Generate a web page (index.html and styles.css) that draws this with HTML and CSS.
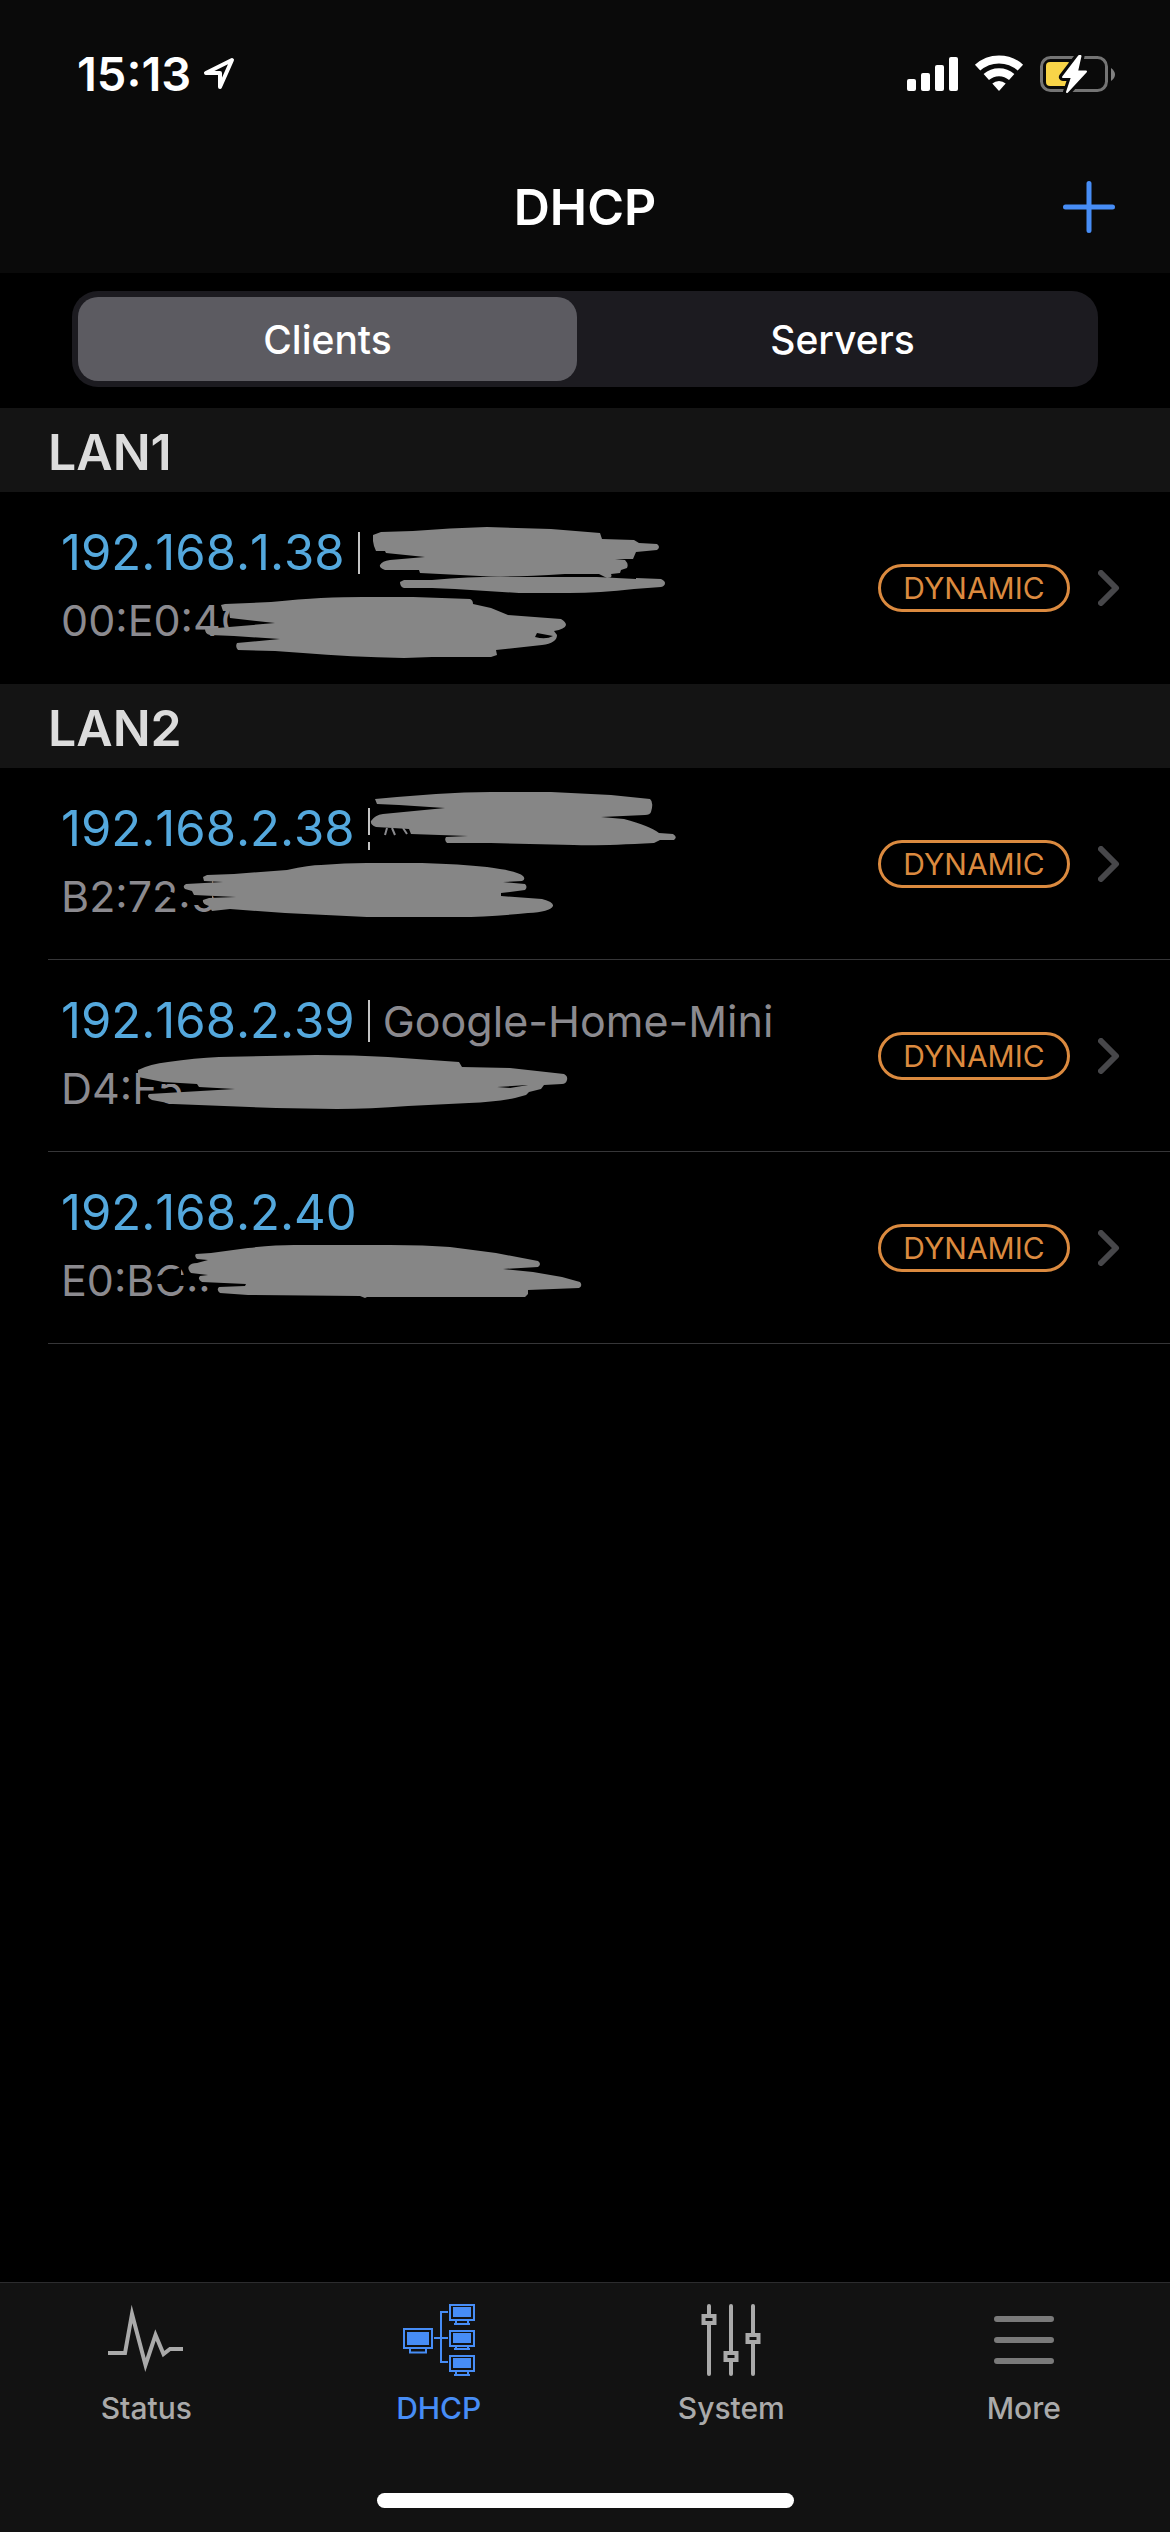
FILE: index.html
```html
<!DOCTYPE html>
<html lang="en">
<head>
<meta charset="utf-8">
<meta name="viewport" content="width=device-width, initial-scale=1">
<title>DHCP</title>
<link rel="stylesheet" href="styles.css">
</head>
<body>
<header class="header">
  <div class="status-bar">
    <div class="clock">
      <span>15:13</span>
      <svg width="32" height="34" viewBox="0 0 32 34" aria-hidden="true"><path d="M29 3 L3 16 H17 V30 Z" fill="none" stroke="#fff" stroke-width="4" stroke-linejoin="round"/></svg>
    </div>
    <svg width="208" height="40" viewBox="0 0 208 40" aria-hidden="true">
      <g fill="#fff">
        <rect x="0" y="25" width="9" height="12" rx="2"/><rect x="14" y="19" width="9" height="18" rx="2"/><rect x="28" y="11" width="9" height="26" rx="2"/><rect x="42" y="3" width="9" height="34" rx="2"/>
        <path d="M92 37 L85.3 29.6 A10 10 0 0 1 98.7 29.6 Z"/>
      </g>
      <g fill="none" stroke="#fff" stroke-width="8"><path d="M70.6 13.6 A32 32 0 0 1 113.4 13.6"/><path d="M79.3 23 A19 19 0 0 1 104.7 23"/></g>
      <rect x="134.5" y="3.5" width="65" height="33" rx="9" fill="none" stroke="#747474" stroke-width="3"/>
      <rect x="139" y="8" width="25" height="24" rx="4" fill="#f8d448"/>
      <path d="M204 14 Q208 17 208 20.500 Q208 24 204 27 Z" fill="#808080"/>
      <path d="M172 2 L156 23 H165 L160 38 L179 17.500 H170 L173.500 2 Z" fill="#fff" stroke="#0a0a0a" stroke-width="8" stroke-linejoin="round"/>
      <path d="M172 2 L156 23 H165 L160 38 L179 17.500 H170 L173.500 2 Z" fill="#fff" stroke="#fff" stroke-width="2" stroke-linejoin="round"/>
    </svg>
  </div>
  <div class="nav-bar">
    <h1 class="title">DHCP</h1>
    <button class="add" type="button" aria-label="Add">
      <svg width="52" height="52" viewBox="0 0 52 52"><path d="M26 2.500 V49.500 M2.500 26 H49.500" stroke="#478df6" stroke-width="5" stroke-linecap="round"/></svg>
    </button>
  </div>
</header>

<main class="content">
  <div class="segments">
    <button class="segment segment-on" type="button" aria-pressed="true">Clients</button>
    <button class="segment" type="button" aria-pressed="false">Servers</button>
  </div>

  <section>
    <h2 class="group">LAN1</h2>
    <a class="client" href="#">
      <span class="details">
        <span class="line"><span class="ip">192.168.1.38</span><span class="bar"></span></span>
        <span class="mac">00:E0:4C</span>
      </span>
      <svg class="scribble" width="720" height="192" viewBox="0 0 720 192" aria-hidden="true">
        <path fill="#000" d="M229 118 L275 120 V160 L234 150 L232 140 L229 130 Z"/>
        <path d="M373 43 L381 40 L413 39 Q450 36 487 35 L551 37 L600 41 L602 47 L634 48 L639 51 L657 52 Q661 55 657 58 L636 60 L633 67 L615 67 L625 68 Q629 72 627 76 L621 78 L620 81 L611 82 Q613 86 607 86 L599 82 L565 82 Q505 86 480 84 L420 81 L419 78 L385 78 Q379 76 380 73 Q382 69 390 68 L425 65 L386 61 L385 59 L376 59 L374 54 L373 49 Z"/>
        <path d="M400 90 L404 88 L432 88 Q480 84 510 85 L597 85 L636 87 L636 86 L661 87 Q665 89 665 91 Q665 94 661 95 L634 97 Q600 101 569 101 L519 101 L455 97 L432 96 L404 96 Q400 95 400 90 Z"/>
        <path fill-rule="evenodd" d="M221 113 L225 112 L271 110 Q300 107 321 106 Q345 105 363 105 L413 105 L470 107 Q473 108 473 112 L491 116 L508 123 L561 127 Q566 130 566 133 Q565 137 554 139 L557 143 Q557 151 542 153 L496 158 L497 163 L491 165 L432 165 L404 166 Q350 165 303 161 L275 159 L238 158 Q235 155 237 151 L280 147 L234 144 L210 143 Q205 142 205 137 L275 131 L230 126 L229 119 L223 119 Z M537 141 L535 145 Q546 148 553 144 Z"/>
      </svg>
      <span class="badge">DYNAMIC</span>
      <svg class="chevron" width="22" height="36" viewBox="0 0 22 36" aria-hidden="true"><path d="M3 3 L18 18 L3 33"/></svg>
    </a>
  </section>

  <section>
    <h2 class="group">LAN2</h2>
    <a class="client client-ruled" href="#">
      <span class="details">
        <span class="line"><span class="ip">192.168.2.38</span><span class="bar"></span></span>
        <span class="mac">B2:72:5</span>
      </span>
      <svg class="scribble" width="720" height="192" viewBox="0 0 720 192" aria-hidden="true">
        <path fill="#000" d="M364 67 H370 V74 H364 Z M162 121 L174 125 V131 L162 127 Z M180 108 H212 V137 H190 V130 H180 Z"/>
        <path fill="none" stroke="#8a8a8e" stroke-width="2" d="M387 60 L385 67 M392 60 L395 67 M403 60 L407 66"/>
        <path d="M375 31 L397 29 L436 26 Q465 24 491 24 L551 24 L611 27 L650 31 Q654 34 651 44 Q650 47 645 47 L601 49 L624 51 Q650 58 659 65 L673 66 Q678 69 674 72 L660 72 L654 75 Q600 78 574 77 L491 75 L447 75 Q444 72 446 69 L468 68 L411 66 L409 61 L376 59 Q370 57 371 53 Q375 47 383 46 L445 40 L399 37 L377 36 Z"/>
        <path d="M203 109 L207 107 L234 106 L287 102 Q310 97 321 97 Q345 95 367 95 L422 95 Q460 96 487 99 Q518 103 523 108 Q526 111 522 113 L503 114 L525 116 Q528 119 525 122 L501 125 V128 L542 131 Q554 134 553 138 Q550 144 528 145 Q490 149 459 149 L367 149 L285 145 L230 141 L212 143 L209 138 Q202 136 203 132 L209 130 L236 129 L194 127 L192 123 L185 121 Q182 118 186 116 L223 114 L204 113 Z"/>
      </svg>
      <span class="badge">DYNAMIC</span>
      <svg class="chevron" width="22" height="36" viewBox="0 0 22 36" aria-hidden="true"><path d="M3 3 L18 18 L3 33"/></svg>
    </a>
    <a class="client client-ruled" href="#">
      <span class="details">
        <span class="line"><span class="ip">192.168.2.39</span><span class="bar"></span><span class="host">Google-Home-Mini</span></span>
        <span class="mac">D4:F5</span>
      </span>
      <svg class="scribble" width="720" height="192" viewBox="0 0 720 192" aria-hidden="true">
        <path fill="#000" d="M144 108 H200 V124 H144 Z"/>
        <path fill-rule="evenodd" d="M138 110 Q150 104 168 102 Q195 98 219 97 L316 95 Q355 95 388 97 L459 102 L462 107 L510 108 L564 114 Q568 116 567 120 Q566 124 562 124 L544 125 L541 129 L529 132 L526 135 L515 138 Q495 142 469 143 L408 146 Q370 149 337 149 L276 148 L173 144 L152 140 Q146 137 149 134 L235 129 L199 127 L197 124 L163 122 L138 117 Z M497 127 L528 125 L510 128 Z"/>
      </svg>
      <span class="badge">DYNAMIC</span>
      <svg class="chevron" width="22" height="36" viewBox="0 0 22 36" aria-hidden="true"><path d="M3 3 L18 18 L3 33"/></svg>
    </a>
    <a class="client client-ruled" href="#">
      <span class="details">
        <span class="line"><span class="ip">192.168.2.40</span></span>
        <span class="mac">E0:BC::</span>
      </span>
      <svg class="scribble" width="720" height="192" viewBox="0 0 720 192" aria-hidden="true">
        <path fill="#000" d="M151 127 L181 115 V132 H151 Z M184 110 H206 V134 H184 Z"/>
        <path d="M196 102 L211 101 L248 96 Q275 93 294 93 L390 93 Q425 93 450 95 L496 101 L538 109 Q542 112 538 115 L503 117 L533 120 L562 125 L580 130 Q583 134 579 136 L528 138 L528 142 L525 145 L367 145 L365 146 L360 144 L248 143 L220 141 Q216 138 219 135 L245 134 L246 132 L202 130 Q197 127 200 124 L208 123 L191 121 Q187 117 189 114 Q191 111 197 111 L208 108 L197 107 Q194 104 196 102 Z"/>
      </svg>
      <span class="badge">DYNAMIC</span>
      <svg class="chevron" width="22" height="36" viewBox="0 0 22 36" aria-hidden="true"><path d="M3 3 L18 18 L3 33"/></svg>
    </a>
  </section>
</main>

<footer class="footer">
  <nav class="tabs">
    <a class="tab" href="#">
      <svg width="76" height="72" viewBox="0 0 76 72" aria-hidden="true"><path d="M0 49 H17 L24 10 L37.500 61 L47.500 31 L55.500 50 L62 45 H75" fill="none" stroke="#aaa" stroke-width="4" stroke-miterlimit="10"/></svg>
      <span>Status</span>
    </a>
    <a class="tab tab-on" href="#">
      <svg width="72" height="72" viewBox="0 0 72 72" aria-hidden="true">
        <g fill="none" stroke="#478df6" stroke-width="2">
          <rect x="1" y="25" width="28" height="19"/><path d="M7 45 V49 M23 45 V49 M6 48.500 H24"/>
          <path d="M45 8 H38 V58 H45 M31 34 H45"/>
          <rect x="47" y="1" width="24" height="15"/><path d="M53 16 V20 M65 16 V20 M51 20 H67"/>
          <rect x="47" y="27" width="24" height="15"/><path d="M53 42 V46 M65 42 V46 M51 45 H67"/>
          <rect x="47" y="52" width="24" height="15"/><path d="M53 67 V71 M65 67 V71 M51 71 H67"/>
        </g>
        <g fill="#478df6"><rect x="4" y="28" width="22" height="13"/><rect x="50" y="3" width="18" height="10"/><rect x="50" y="29" width="18" height="10"/><rect x="50" y="54" width="18" height="10"/></g>
      </svg>
      <span>DHCP</span>
    </a>
    <a class="tab" href="#">
      <svg width="60" height="72" viewBox="0 0 60 72" aria-hidden="true">
        <path d="M8 2 V70 M30 2 V70 M52 2 V70" stroke="#aaa" stroke-width="4" stroke-linecap="round"/>
        <g fill="#121212" stroke="#aaa" stroke-width="4"><rect x="2.500" y="12" width="11" height="7"/><rect x="24.500" y="49" width="11" height="7"/><rect x="46.500" y="31" width="11" height="7"/></g>
      </svg>
      <span>System</span>
    </a>
    <a class="tab" href="#">
      <svg width="60" height="72" viewBox="0 0 60 72" aria-hidden="true"><path d="M3 15 H57 M3 36 H57 M3 57 H57" stroke="#7a7a7a" stroke-width="6" stroke-linecap="round"/></svg>
      <span>More</span>
    </a>
  </nav>
  <div class="home-indicator"></div>
</footer>
</body>
</html>
```
FILE: styles.css
```css
* { box-sizing: border-box; }

body {
  margin: 0;
  min-height: 100vh;
  display: flex;
  flex-direction: column;
  background: #000;
  color: #fff;
  font-family: Inter, "Liberation Sans", sans-serif;
}

a { color: inherit; text-decoration: none; }

button {
  margin: 0;
  padding: 0;
  border: 0;
  background: none;
  color: inherit;
  font: inherit;
}

svg { display: block; flex: none; }

h1, h2 { margin: 0; }

.header { background: #0a0a0a; }

.status-bar {
  display: flex;
  justify-content: space-between;
  align-items: center;
  height: 141px;
  padding: 6px 55px 0 77px;
}

.clock {
  display: flex;
  align-items: center;
  gap: 12px;
  font-size: 47px;
  font-weight: 600;
}

.nav-bar {
  display: grid;
  grid-template-columns: 1fr auto 1fr;
  align-items: center;
  height: 132px;
  padding: 0 55px;
}

.title {
  grid-column: 2;
  font-size: 50px;
  font-weight: 600;
}

.add { justify-self: end; }

.content { flex: 1; }

.segments {
  display: grid;
  grid-template-columns: 1fr 1fr;
  gap: 16px;
  margin: 18px 72px 21px;
  padding: 6px;
  border-radius: 26px;
  background: #1c1b20;
}

.segment {
  height: 84px;
  border-radius: 20px;
  font-size: 39px;
  font-weight: 500;
}

.segment-on { background: #5c5b61; }

.group {
  height: 84px;
  padding: 0 48px;
  background: #141414;
  color: #dcdcdc;
  font-size: 50px;
  font-weight: 600;
  line-height: 88px;
}

.client {
  position: relative;
  display: flex;
  align-items: center;
  height: 192px;
  padding-right: 50px;
}

.client-ruled::after {
  content: "";
  position: absolute;
  left: 48px;
  right: 0;
  bottom: 0;
  height: 1px;
  background: #363638;
}

.details {
  flex: 1;
  align-self: flex-start;
  display: flex;
  flex-direction: column;
  gap: 12px;
  padding: 31px 0 0 61px;
}

.line {
  display: flex;
  align-items: center;
  gap: 13px;
  line-height: 60px;
}

.ip { color: #54a8dd; font-size: 49px; font-kerning: none; }

.bar { width: 2px; height: 42px; background: #c4c4c4; }

.host, .mac { color: #8b8a8f; font-size: 43px; }

.mac { line-height: 50px; }

.scribble {
  position: absolute;
  left: 0;
  top: 0;
  fill: #868686;
}

.badge {
  width: 192px;
  border: 3px solid #db8a3f;
  border-radius: 24px;
  color: #db8a3f;
  font-size: 30px;
  line-height: 42px;
  text-align: center;
}

.chevron {
  margin-left: 28px;
  fill: none;
  stroke: #47474a;
  stroke-width: 6;
  stroke-linecap: round;
  stroke-linejoin: round;
}

.footer {
  border-top: 1px solid #2c2c2e;
  background: #121212;
}

.tabs {
  display: grid;
  grid-template-columns: repeat(4, 1fr);
}

.tab {
  display: flex;
  flex-direction: column;
  align-items: center;
  gap: 12px;
  padding-top: 21px;
  color: #aaa;
  font-size: 30px;
  font-weight: 500;
  line-height: 40px;
}

.tab-on { color: #478df6; }

.home-indicator {
  width: 417px;
  height: 15px;
  margin: 65px auto 24px;
  border-radius: 8px;
  background: #fff;
}
```
